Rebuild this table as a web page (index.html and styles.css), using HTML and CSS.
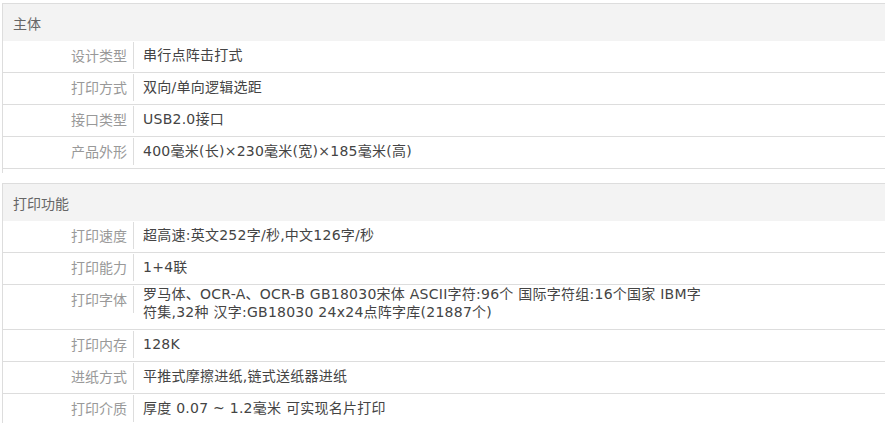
FILE: index.html
```html
<!DOCTYPE html>
<html lang="zh-CN">
<head>
<meta charset="utf-8">
<title>规格参数</title>
<link rel="stylesheet" href="styles.css">
</head>
<body>
<div class="spec">
  <section class="group">
    <h3 class="group-title">主体</h3>
    <dl class="row"><dt>设计类型</dt><dd>串行点阵击打式</dd></dl>
    <dl class="row"><dt>打印方式</dt><dd>双向/单向逻辑选距</dd></dl>
    <dl class="row"><dt>接口类型</dt><dd>USB2.0接口</dd></dl>
    <dl class="row"><dt>产品外形</dt><dd>400毫米(长)×230毫米(宽)×185毫米(高)</dd></dl>
  </section>
  <section class="group">
    <h3 class="group-title">打印功能</h3>
    <dl class="row"><dt>打印速度</dt><dd>超高速:英文252字/秒,中文126字/秒</dd></dl>
    <dl class="row"><dt>打印能力</dt><dd>1+4联</dd></dl>
    <dl class="row multi"><dt>打印字体</dt><dd>罗马体、OCR-A、OCR-B GB18030宋体 ASCII字符:96个 国际字符组:16个国家 IBM字<br>符集,32种 汉字:GB18030 24x24点阵字库(21887个)</dd></dl>
    <dl class="row"><dt>打印内存</dt><dd>128K</dd></dl>
    <dl class="row"><dt>进纸方式</dt><dd>平推式摩擦进纸,链式送纸器进纸</dd></dl>
    <dl class="row"><dt>打印介质</dt><dd>厚度 0.07 ~ 1.2毫米 可实现名片打印</dd></dl>
  </section>
</div>
</body>
</html>
```
FILE: styles.css
```css
html, body {
  background: #fff;
}
body {
  margin: 3px 2px 2px 2px;
  font-family: "DejaVu Sans", "Noto Sans CJK SC", sans-serif;
  font-size: 14px;
}
.group {
  border-left: 1px solid #ddd;
  border-top: 1px solid #ddd;
  padding-bottom: 4px;
  margin-bottom: 10px;
}
.group-title {
  margin: 0;
  height: 36px;
  line-height: 36px;
  padding: 1px 0 0 10px;
  background: #f3f3f3;
  font-family: "Noto Sans CJK SC", sans-serif;
  font-size: 14px;
  font-weight: normal;
  color: #666;
}
.row {
  display: flex;
  margin: 0;
  border-bottom: 1px solid #ddd;
}
.row dt {
  flex: none;
  width: 124px;
  padding-right: 6px;
  margin-top: 1px;
  height: 27px;
  line-height: 27px;
  text-align: right;
  border-right: 1px solid #ddd;
  font-family: "Noto Sans CJK SC", sans-serif;
  color: #999;
}
.row dd {
  margin: 0;
  padding: 5px 0 8px 9px;
  line-height: 18px;
  letter-spacing: 0.25px;
  color: #444;
}
.row.multi dd {
  padding-top: 0;
}
```
